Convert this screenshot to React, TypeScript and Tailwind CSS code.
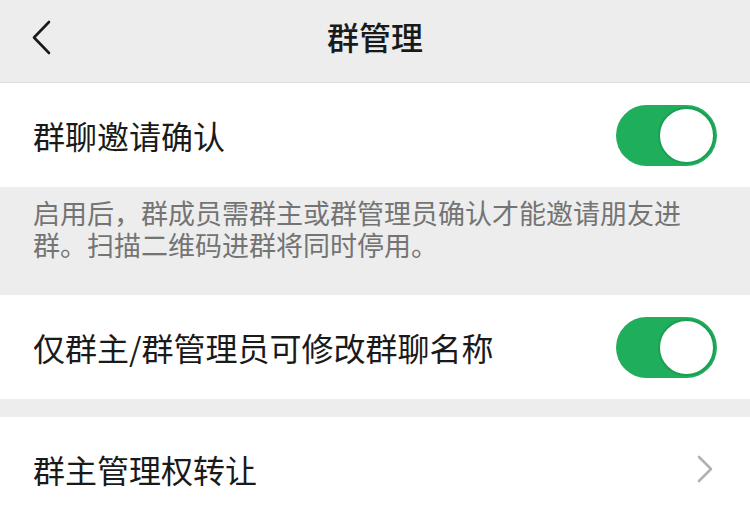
const font = { fontFamily: '"Noto Sans CJK SC", "Noto Sans", sans-serif' };

function Toggle() {
  return (
    <div className="flex h-[61px] w-[101px] items-center justify-end rounded-full bg-[#1fae5c] p-[2px]">
      <div className="h-[57px] w-[57px] rounded-full border-2 border-[#1a9f53] bg-white" />
    </div>
  );
}

function SwitchRow({ label }: { label: string }) {
  return (
    <div className="flex h-[104px] items-center justify-between bg-white pl-[33px] pr-[33px]">
      <span className="text-[32px] leading-none text-[#1a1a1a]">{label}</span>
      <Toggle />
    </div>
  );
}

export default function App() {
  return (
    <div className="h-[505px] w-[750px] overflow-hidden bg-[#ededed]" style={font}>
      {/* Header */}
      <div className="relative flex h-[83px] items-center justify-center border-b border-[#dedede] bg-[#ededed] pb-[10px]">
        <svg
          className="absolute left-[31px] top-[20px]"
          width="22"
          height="35"
          viewBox="0 0 22 35"
          fill="none"
          stroke="#1a1a1a"
          strokeWidth="2.6"
          strokeLinecap="round"
          strokeLinejoin="round"
        >
          <path d="M18 2 L3 17.5 L18 33" />
        </svg>
        <span className="text-[32px] font-medium leading-none text-[#1a1a1a]">群管理</span>
      </div>

      <SwitchRow label="群聊邀请确认" />

      {/* Description */}
      <div className="h-[108px] pl-[33px] pr-[40px] pt-[10px]">
        <p className="text-[27px] leading-[32px] text-[#747474]">
          启用后，群成员需群主或群管理员确认才能邀请朋友进群。扫描二维码进群将同时停用。
        </p>
      </div>

      <SwitchRow label="仅群主/群管理员可修改群聊名称" />

      <div className="h-[18px]" />

      <div className="flex h-[104px] items-center justify-between bg-white pl-[33px] pr-[36px]">
        <span className="text-[32px] leading-none text-[#1a1a1a]">群主管理权转让</span>
        <svg
          width="18"
          height="28"
          viewBox="0 0 18 28"
          fill="none"
          stroke="#b2b2b2"
          strokeWidth="2.6"
          strokeLinecap="round"
          strokeLinejoin="round"
        >
          <path d="M3 2 L15 14 L3 26" />
        </svg>
      </div>
    </div>
  );
}
